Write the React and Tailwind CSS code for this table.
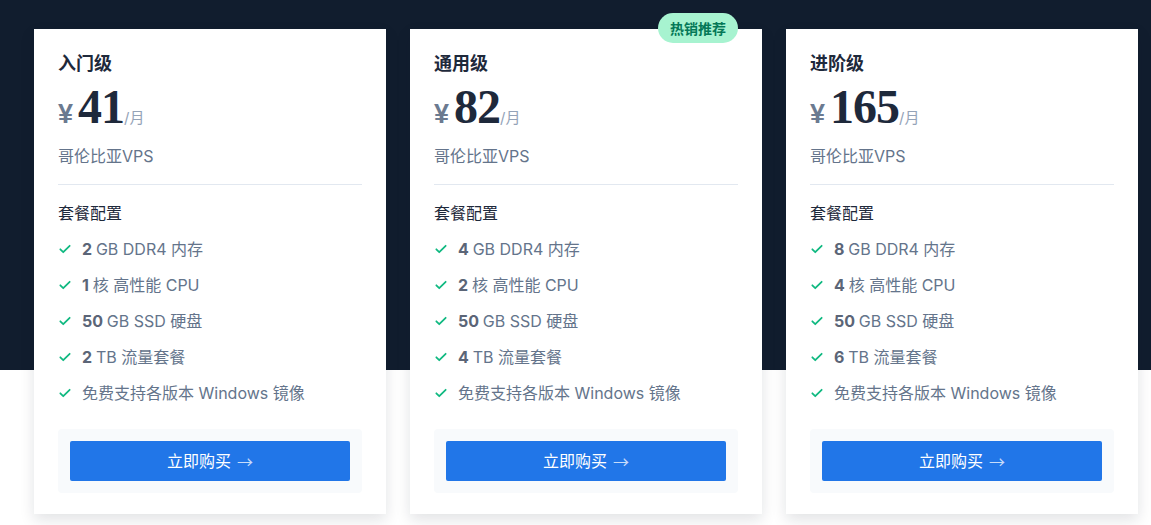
import React from "react";

const plans = [
  { name: "入门级", price: "41", mem: "2", cpu: "1", disk: "50", bw: "2" },
  { name: "通用级", price: "82", mem: "4", cpu: "2", disk: "50", bw: "4", hot: true },
  { name: "进阶级", price: "165", mem: "8", cpu: "4", disk: "50", bw: "6" },
];

function Check() {
  return (
    <svg width="14" height="14" viewBox="0 0 24 24" fill="none" stroke="#10b981" strokeWidth="3" strokeLinecap="round" strokeLinejoin="round">
      <path d="M4 12.5l5 5L20 6.5" />
    </svg>
  );
}

function Feature({ bold, rest }) {
  return (
    <li className="flex items-center h-[36px]">
      <span className="w-[24px] flex items-center"><Check /></span>
      <span className="text-[16px] text-[#64748b]">
        {bold && <b className="font-bold text-[#5b6577]">{bold} </b>}
        {rest}
      </span>
    </li>
  );
}

function Card({ p }) {
  return (
    <div className="relative w-[352px] bg-white shadow-[0_6px_14px_rgba(15,23,42,0.12)] px-[24px] pt-[22px] pb-[21px]">
      {p.hot && (
        <div className="absolute top-[-16px] right-[24px] w-[80px] h-[30px] rounded-full bg-[#a7f3d0] text-[#047857] text-[14px] font-bold flex items-center justify-center">
          热销推荐
        </div>
      )}
      <div className="text-[18px] font-bold text-[#1e293b] leading-[26px]">{p.name}</div>
      <div className="flex items-baseline mt-[6px] h-[48px] leading-[48px]">
        <span className="text-[27px] font-bold text-[#6b7a90] mr-[5px]" style={{ fontFamily: '"Liberation Sans", sans-serif' }}>¥</span>
        <span className="text-[48px] font-bold text-[#1e293b] tracking-[-1px]" style={{ fontFamily: '"Liberation Serif", serif' }}>{p.price}</span>
        <span className="text-[15px] text-[#94a3b8]">/月</span>
      </div>
      <div className="text-[16px] text-[#64748b] mt-[13px] leading-[24px]">哥伦比亚VPS</div>
      <div className="h-px bg-[#e2e8f0] mt-[16px]" />
      <div className="text-[16px] text-[#1e293b] mt-[16px] leading-[24px]">套餐配置</div>
      <ul className="mt-[6px]">
        <Feature bold={p.mem} rest="GB DDR4 内存" />
        <Feature bold={p.cpu} rest="核 高性能 CPU" />
        <Feature bold={p.disk} rest="GB SSD 硬盘" />
        <Feature bold={p.bw} rest="TB 流量套餐" />
        <Feature rest="免费支持各版本 Windows 镜像" />
      </ul>
      <div className="mt-[18px] bg-[#f8fafc] rounded-[4px] p-[12px]">
        <div className="h-[40px] bg-[#2176e8] rounded-[2px] flex items-center justify-center text-white text-[16px]">
          立即购买
          <span className="ml-[6px] text-[#c7dcfa]" style={{ fontFamily: '"Noto Sans CJK SC", sans-serif' }}>→</span>
        </div>
      </div>
    </div>
  );
}

export default function App() {
  return (
    <div
      className="relative w-[1151px] h-[525px] bg-white overflow-hidden"
      style={{ fontFamily: 'Inter, "Noto Sans CJK SC", sans-serif' }}
    >
      <div className="absolute inset-x-0 top-0 h-[370px] bg-[#111d2e]" />
      <div className="relative flex gap-[24px] pl-[34px] pt-[29px]">
        {plans.map((p) => (
          <Card key={p.name} p={p} />
        ))}
      </div>
    </div>
  );
}
